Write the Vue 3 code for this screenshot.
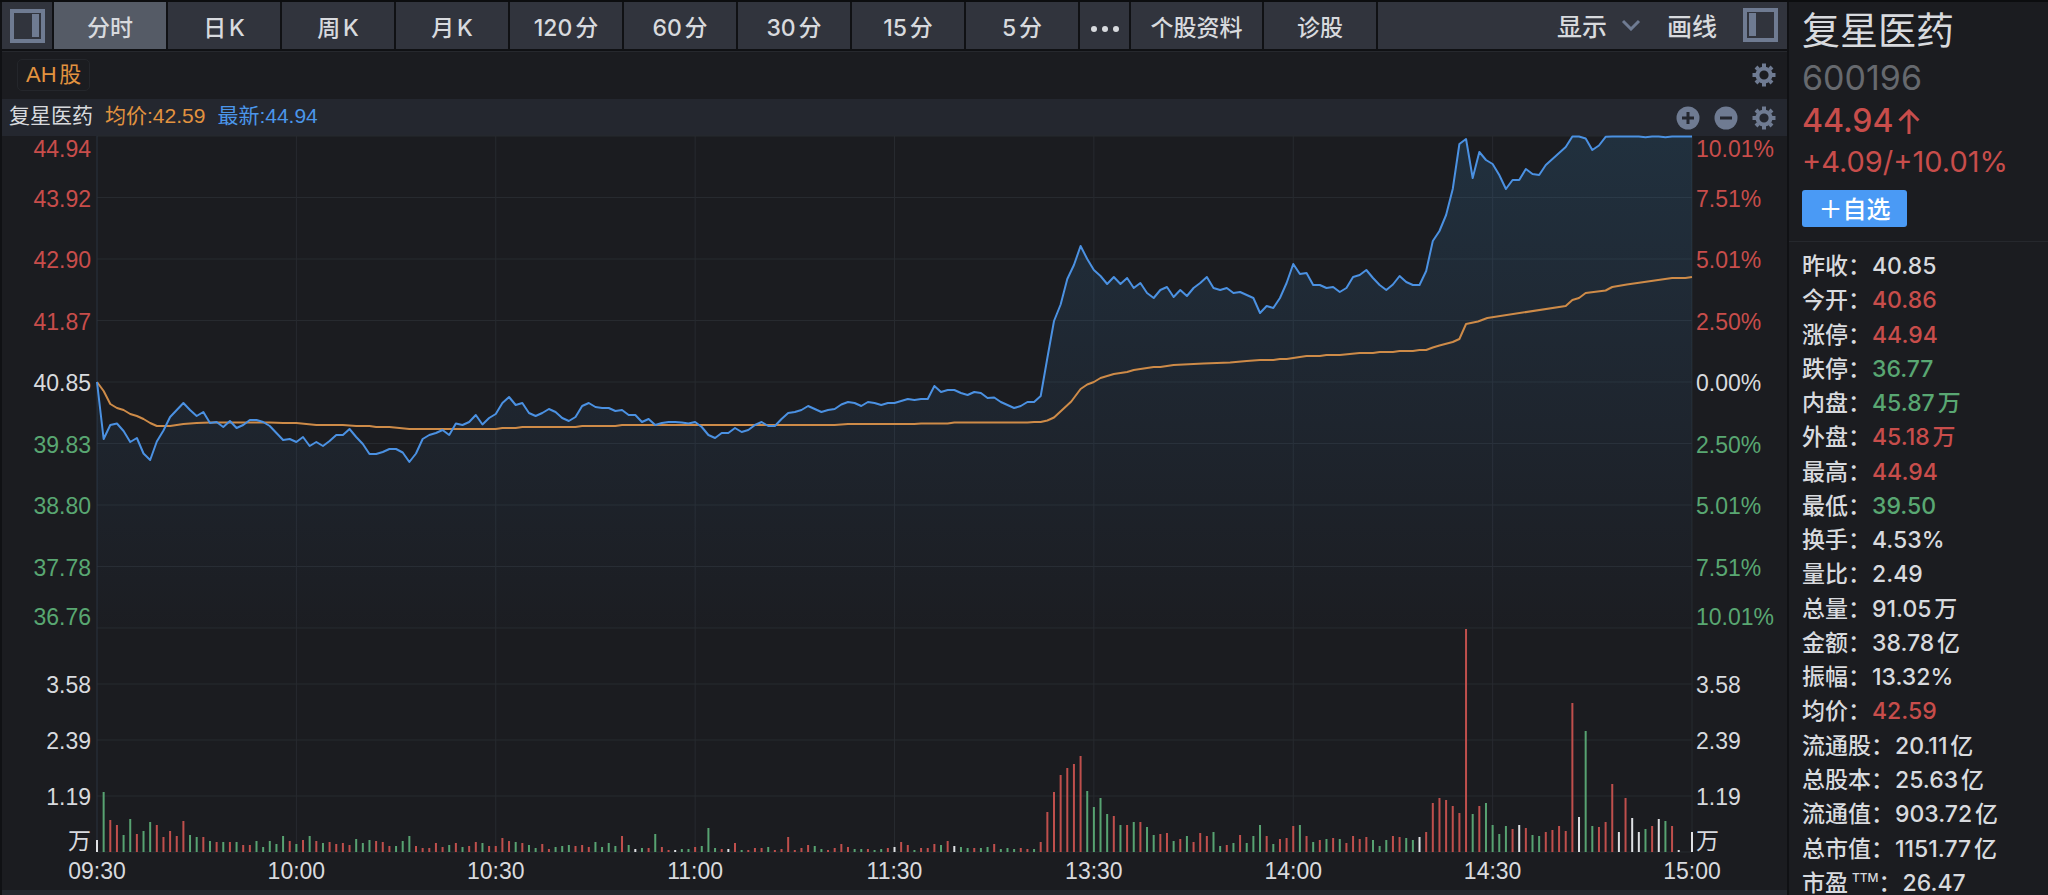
<script setup>
import { ref, computed } from 'vue'

const periods = ['分时', '日K', '周K', '月K', '120分', '60分', '30分', '15分', '5分']
const active = ref('分时')

const priceTicks = [
  ['44.94', '10.01%', 'up'],
  ['43.92', '7.51%', 'up'],
  ['42.90', '5.01%', 'up'],
  ['41.87', '2.50%', 'up'],
  ['40.85', '0.00%', 'flat'],
  ['39.83', '2.50%', 'down'],
  ['38.80', '5.01%', 'down'],
  ['37.78', '7.51%', 'down'],
  ['36.76', '10.01%', 'down'],
]
const volumeTicks = ['', '3.58', '2.39', '1.19', '万']
const times = ['09:30', '10:00', '10:30', '11:00', '11:30', '13:30', '14:00', '14:30', '15:00']

const stats = [
  ['昨收', '40.85', 'flat'],
  ['今开', '40.86', 'up'],
  ['涨停', '44.94', 'up'],
  ['跌停', '36.77', 'down'],
  ['内盘', '45.87万', 'down'],
  ['外盘', '45.18万', 'up'],
  ['最高', '44.94', 'up'],
  ['最低', '39.50', 'down'],
  ['换手', '4.53%', 'flat'],
  ['量比', '2.49', 'flat'],
  ['总量', '91.05万', 'flat'],
  ['金额', '38.78亿', 'flat'],
  ['振幅', '13.32%', 'flat'],
  ['均价', '42.59', 'up'],
  ['流通股', '20.11亿', 'flat'],
  ['总股本', '25.63亿', 'flat'],
  ['流通值', '903.72亿', 'flat'],
  ['总市值', '1151.77亿', 'flat'],
  ['市盈', '26.47', 'flat', 'TTM'],
]

// One value per trading minute, measured down from the upper price limit (492 = lower limit).
const latest = [
  246, 303, 289, 287.5, 295, 306, 302, 317.5, 324, 305.5, 294.5, 281, 274, 267, 274, 280, 276, 287, 286, 291,
  285, 292, 289, 284, 284, 286, 290, 297, 304, 303, 306, 301, 310, 306, 310, 305, 299, 299, 293, 301,
  308, 318, 318, 316, 313, 313, 316.5, 326, 317.5, 303, 299, 297, 294, 299, 287.5, 289, 286, 279, 288.5, 282,
  278, 267, 261, 269, 267, 277, 280, 277, 273, 276, 282, 285, 281, 270, 267, 271, 272, 272, 275, 274,
  279, 279, 286, 283, 289, 287, 286, 286, 286.5, 287.5, 286, 291, 299, 302, 297, 297, 292, 296, 294, 289,
  286, 290, 290, 283, 277, 276, 274, 270, 273, 276, 274, 273, 268.5, 266, 267, 270, 266, 267, 269, 267,
  267, 265, 263, 264, 263, 263, 250, 256, 254, 254, 257, 259, 256, 257, 262, 261.5, 266, 269, 272, 270,
  266, 266, 260, 222, 185, 168.5, 143, 129, 110, 123, 134, 140, 148, 141, 148, 142, 152, 147, 157, 162,
  154, 151, 161, 154, 160, 152, 147, 141, 152, 154, 152, 157, 156, 159, 162, 177, 170, 172, 162, 147,
  128, 138, 137, 149, 149, 152, 151, 156, 152, 141, 139, 134, 142, 149, 154, 148.5, 140, 146, 149, 149,
  135, 105, 95, 79, 53, 8, 3, 42, 16, 24, 28, 39, 53, 44, 44, 33, 38, 39, 29, 23,
  17, 11, 0.5, 0.5, 2.5, 14, 9.5, 0.8, 0.5, 0.5, 0.5, 0.5, 0.5, 1.2, 0.5, 0.5, 1.2, 0.5, 0.5, 0.5,
  0.5,
]

// Turning points of the average price as [minute, depth].
const average = [
  [0, 246], [1, 255], [2, 268], [3, 272], [4, 274], [5, 278], [6, 280], [7, 283], [8, 287], [9, 290], [11, 290],
  [13, 288], [15, 287], [17, 286.5], [26, 286.5], [28, 287], [30, 287], [33, 289], [37, 289], [39, 290], [41, 290],
  [42, 291], [44, 291], [47, 293], [60, 293], [61, 292], [63, 292], [64, 291], [72, 291], [73, 290], [78, 290],
  [79, 289], [111, 289], [113, 288], [123, 288], [124, 287.5], [128, 287.5], [129, 286.5], [140, 286.5], [141, 286],
  [142, 286], [143, 284.5], [144, 281.5], [145.3, 273.5], [146.6, 265.5], [148, 253], [149, 248.5], [150, 246],
  [151, 242], [153, 238], [155, 236], [156, 234], [159, 231], [160, 231], [162, 229], [166.5, 227.5], [170.5, 226.5],
  [173, 225], [175, 224], [177, 224], [178, 223], [179, 223], [182, 220], [184, 220], [185, 219], [187, 219],
  [190, 217], [192, 217], [193, 216], [195, 216], [196, 215], [198, 215], [199, 214], [200, 214], [201, 211.5],
  [202, 209.5], [204, 206], [205, 203], [206, 188], [207.8, 185.5], [209.2, 182], [221, 170], [222, 164],
  [223, 162], [224, 157], [227, 154.5], [228, 151], [230.2, 148.5], [237, 142], [239, 142], [240, 141],
]

// Traded volume per minute: direction (r rise, g fall, w unchanged) and bar height.
const volume = (
  'w12 g60 r32 r27 g17 g33 r18 g21 g30 r27 r15 r21 r16 r31 g17 g15 r15 g11 r10 g10 ' +
  'r10 g10 r7 r7 g11 g5 g11 g8 g16 r11 g8 r12 g16 r11 g9 r10 r8 r9 r7 g13 ' +
  'g9 g12 r11 r10 r6 g6 g11 g16 r6 r4 r4 r9 r5 g7 r9 g5 r6 r10 g9 r6 ' +
  'r6 r14 r11 g10 r9 g7 g4 r8 r3 g5 g6 g7 r6 r7 r5 g10 g5 g9 g6 r16 ' +
  'g7 w3 g4 r4 g18 r5 r2 w2 g3 g3 r5 g6 g24 g4 r3 w3 r9 g2 r2 r4 ' +
  'r4 g5 r2 r3 r15 r2 r4 r7 g6 g3 r2 r4 r8 r5 g3 g3 r3 g2 g3 r4 ' +
  'w5 r10 r7 g2 r4 r4 r8 g7 r11 w6 g5 g4 r4 g4 g5 r8 g3 g4 g3 r4 ' +
  'r3 g3 r10 r40 r60 r77 r84 r88 r96 g61 g45 g54 g38 r36 g27 r27 g30 r30 g25 g17 ' +
  'r18 r19 g11 r13 g16 r10 r19 r16 g20 g6 r7 g9 r17 g9 g16 g27 r16 g8 r13 r14 ' +
  'r26 g27 r16 g10 r12 g13 r14 g13 r9 r16 r13 r15 g12 g6 g12 r16 r15 g14 g12 w15 ' +
  'r20 r49 r54 r52 r46 r39 r223 g38 r46 g49 g27 g18 g26 r23 w27 r24 g17 g16 r20 r22 ' +
  'r26 r21 r149 w35 g121 g26 r25 r30 r68 w20 r54 w34 w20 g23 r26 w33 g31 r26 w2 w0 w20'
).split(' ')

const latestPath = computed(() => 'M' + latest.map((y, m) => `${m} ${y}`).join('L'))
const areaPath = computed(() => `${latestPath.value}L240 492L0 492Z`)
const averagePath = computed(() => 'M' + average.map((p) => p.join(' ')).join('L'))
const barsOf = (kind) =>
  volume.map((v, m) => (v[0] === kind ? `M${m} 716V${716 - Number(v.slice(1))}` : '')).join('')

const gridPath =
  [0, 61.5, 123, 184.5, 246, 307.5, 369, 430.5, 492, 548, 604, 660, 716].map((y) => `M0 ${y}H240`).join('') +
  [30, 60, 90, 120, 150, 180, 210, 240].map((x) => `M${x} 0V716`).join('')
</script>

<template>
  <div class="app">
    <main class="main">
      <nav class="toolbar">
        <button class="cell icon-cell" aria-label="左侧栏">
          <svg class="panel" viewBox="0 0 35 34"><rect x="2" y="2" width="31" height="30" /><path d="M25.5 5V28" /></svg>
        </button>
        <button
          v-for="p in periods"
          :key="p"
          class="cell tab"
          :class="{ active: p === active }"
          @click="active = p"
        >{{ p }}</button>
        <button class="cell more" aria-label="更多">
          <svg viewBox="0 0 28 6"><circle cx="3" cy="3" r="3" /><circle cx="14" cy="3" r="3" /><circle cx="25" cy="3" r="3" /></svg>
        </button>
        <button class="cell tab wide">个股资料</button>
        <button class="cell tab">诊股</button>
        <div class="cell tools">
          <button class="tool">
            显示
            <svg class="chevron" viewBox="0 0 20 12"><path d="M2 2L10 10L18 2" /></svg>
          </button>
          <button class="tool">画线</button>
          <button class="tool" aria-label="右侧栏">
            <svg class="panel" viewBox="0 0 35 34"><rect x="2" y="2" width="31" height="30" /><path d="M9.5 5V28" /></svg>
          </button>
        </div>
      </nav>

      <div class="tags">
        <button class="tag">AH股</button>
        <button class="round" aria-label="设置">
          <svg viewBox="-12 -12 24 24">
            <circle r="6.6" class="ring" />
            <path class="teeth" d="M0-8V-11.5M0 8V11.5M-8 0H-11.5M8 0H11.5M5.7-5.7L8-8M-5.7-5.7L-8-8M5.7 5.7L8 8M-5.7 5.7L-8 8" />
          </svg>
        </button>
      </div>

      <div class="legend">
        <span>复星医药</span>
        <span class="avg">均价:42.59</span>
        <span class="now">最新:44.94</span>
        <div class="actions">
          <button class="round" aria-label="放大">
            <svg viewBox="-12 -12 24 24"><circle r="11.5" class="disc" /><path class="sign" d="M-6 0H6M0-6V6" /></svg>
          </button>
          <button class="round" aria-label="缩小">
            <svg viewBox="-12 -12 24 24"><circle r="11.5" class="disc" /><path class="sign" d="M-6 0H6" /></svg>
          </button>
          <button class="round" aria-label="指标设置">
            <svg viewBox="-12 -12 24 24">
              <circle r="6.6" class="ring" />
              <path class="teeth" d="M0-8V-11.5M0 8V11.5M-8 0H-11.5M8 0H11.5M5.7-5.7L8-8M-5.7-5.7L-8-8M5.7 5.7L8 8M-5.7 5.7L-8 8" />
            </svg>
          </button>
        </div>
      </div>

      <section class="chart">
        <div class="axis price left">
          <span v-for="t in priceTicks" :key="t[0]" :class="t[2]">{{ t[0] }}</span>
        </div>
        <svg class="plot" viewBox="0 0 240 716" preserveAspectRatio="none" role="img" aria-label="分时走势">
          <defs>
            <linearGradient id="fill" gradientUnits="userSpaceOnUse" x1="0" y1="0" x2="0" y2="492">
              <stop offset="0" stop-color="#3f9bdc" stop-opacity="0.16" />
              <stop offset="1" stop-color="#4a94e8" stop-opacity="0.01" />
            </linearGradient>
          </defs>
          <path class="grid" :d="gridPath" />
          <path class="edge" d="M0 0V716" />
          <path :d="areaPath" fill="url(#fill)" />
          <path class="bars rise" :d="barsOf('r')" />
          <path class="bars fall" :d="barsOf('g')" />
          <path class="bars same" :d="barsOf('w')" />
          <path class="line average" :d="averagePath" />
          <path class="line latest" :d="latestPath" />
        </svg>
        <div class="axis price right">
          <span v-for="(t, i) in priceTicks" :key="i" :class="t[2]">{{ t[1] }}</span>
        </div>
        <div class="axis volume left">
          <span v-for="t in volumeTicks" :key="t">{{ t }}</span>
        </div>
        <div class="axis volume right">
          <span v-for="t in volumeTicks" :key="t">{{ t }}</span>
        </div>
        <div class="times">
          <span v-for="t in times" :key="t">{{ t }}</span>
        </div>
      </section>
      <div class="strip"></div>
    </main>

    <aside class="side">
      <header class="quote">
        <h1>复星医药</h1>
        <p class="code">600196</p>
        <p class="last">44.94<svg viewBox="0 0 22 25"><path d="M11 25V2M1.5 11.5L11 2L20.5 11.5" /></svg></p>
        <p class="change">+4.09/+10.01%</p>
        <button class="add">＋自选</button>
      </header>
      <dl class="stats">
        <div v-for="s in stats" :key="s[0]">
          <dt>{{ s[0] }}<sup v-if="s[3]">{{ s[3] }}</sup>：</dt>
          <dd :class="s[2]">{{ s[1] }}</dd>
        </div>
      </dl>
    </aside>
  </div>
</template>

<style>
body {
  background: #1b1c20;
}
</style>

<style scoped>
* {
  box-sizing: border-box;
}
.app {
  display: grid;
  grid-template-rows: minmax(0, 1fr);
  grid-template-columns: minmax(0, 1fr) 261px;
  height: 100vh;
  min-height: 860px;
  border-top: 2px solid #0c0d0f;
  background: #1b1c20;
  color: #d8dade;
  font-family: "Liberation Sans", "Noto Sans CJK SC", sans-serif;
  text-autospace: normal;
}
button {
  padding: 0;
  border: 0;
  background: none;
  color: inherit;
  font: inherit;
  text-autospace: inherit;
  cursor: pointer;
}
svg {
  display: block;
}
.up {
  color: #c84d4b;
}
.down {
  color: #59a772;
}
.flat {
  color: #d8dade;
}

.main {
  display: flex;
  flex-direction: column;
  min-width: 0;
  border-left: 2px solid #101114;
}
.toolbar {
  display: flex;
  gap: 2px;
  height: 49px;
  padding-bottom: 2px;
  background: #101114;
  font-family: Inter, "Noto Sans CJK SC", sans-serif;
  font-size: 23px;
  font-weight: 500;
}
.cell {
  background: #31343d;
}
.icon-cell {
  display: flex;
  align-items: center;
  justify-content: center;
  width: 50px;
}
.panel {
  width: 35px;
  height: 34px;
  fill: none;
  stroke: #6f7b92;
  stroke-width: 4;
}
.panel path {
  stroke-width: 7;
}
.tab {
  width: 112px;
  padding-top: 1px;
}
.tab.active {
  background: #555b66;
}
.tab.wide {
  width: 131px;
}
.more {
  display: flex;
  align-items: center;
  justify-content: center;
  width: 49px;
  padding-top: 6px;
}
.more svg {
  width: 28px;
  height: 6px;
  fill: #d8dade;
}
.tools {
  display: flex;
  flex: 1;
  align-items: center;
  justify-content: flex-end;
  gap: 26px;
  padding: 0 9px 2px 0;
  font-size: 25px;
}
.tool {
  display: flex;
  align-items: center;
  gap: 14px;
}
.chevron {
  width: 20px;
  height: 12px;
  fill: none;
  stroke: #6f7b92;
  stroke-width: 3;
}

.tags {
  display: flex;
  align-items: center;
  justify-content: space-between;
  height: 48px;
  padding: 0 11px 1px 15px;
  border-top: 1px solid #26282d;
}
.tag {
  height: 32px;
  padding: 0 8px;
  border: 1px solid #24262b;
  border-radius: 5px;
  color: #e2933f;
  font-size: 22px;
  line-height: 30px;
}
.round svg {
  width: 24px;
  height: 24px;
}
.ring {
  fill: none;
  stroke: #6f7b92;
  stroke-width: 4;
}
.teeth {
  fill: none;
  stroke: #6f7b92;
  stroke-width: 4;
}
.disc {
  fill: #6f7b92;
}
.sign {
  fill: none;
  stroke: #24272f;
  stroke-width: 3;
}
.legend {
  display: flex;
  align-items: center;
  gap: 12px;
  height: 37px;
  padding: 0 11px 0 7px;
  background: #24272f;
  font-size: 21px;
}
.legend > span {
  padding-bottom: 7px;
}
.avg {
  color: #e2933f;
}
.now {
  color: #4b96ea;
}
.actions {
  display: flex;
  gap: 14px;
  margin-left: auto;
}

.chart {
  display: grid;
  flex: 1;
  grid-template-columns: 95px minmax(0, 1fr) 95px;
  grid-template-rows: minmax(0, 492fr) minmax(0, 224fr) 38px;
  min-height: 0;
  font-size: 23px;
  line-height: 24px;
}
.plot {
  grid-area: 1 / 2 / 3 / 3;
  width: 100%;
  height: 100%;
  overflow: visible;
}
.plot path {
  vector-effect: non-scaling-stroke;
}
.grid,
.edge {
  fill: none;
  stroke: #272a2f;
  stroke-width: 1;
}
.edge {
  stroke: #2b323f;
}
.bars {
  fill: none;
  stroke-width: 2;
}
.rise {
  stroke: #bf4f4c;
}
.fall {
  stroke: #57a271;
}
.same {
  stroke: #dfe1e4;
}
.line {
  fill: none;
  stroke-width: 2;
  stroke-linejoin: round;
}
.latest {
  stroke: #4b91e2;
}
.average {
  stroke: #ce8b48;
}
.axis {
  display: grid;
  margin: 1px 0 -1px;
}
.price {
  grid-row: 1;
  grid-template-rows: 1fr repeat(7, 2fr) 1fr;
}
.volume {
  grid-row: 2;
  grid-template-rows: 1fr repeat(3, 2fr) 1fr;
}
.axis span {
  align-self: center;
}
.price span:first-child {
  align-self: start;
}
.axis span:last-child {
  align-self: end;
}
.left {
  grid-column: 1;
  padding-right: 6px;
  text-align: right;
}
.right {
  grid-column: 3;
  padding-left: 4px;
}
.times {
  display: grid;
  grid-row: 3;
  grid-column: 2;
  grid-template-columns: repeat(9, 1fr);
  align-items: center;
  margin: 0 -6.25%;
  text-align: center;
}
.strip {
  height: 5px;
  background: #24272f;
}

.side {
  display: flex;
  flex-direction: column;
  min-width: 0;
  border-left: 2px solid #101114;
  font-family: Inter, "Noto Sans CJK SC", sans-serif;
}
.quote {
  padding: 2px 0 14px 13px;
  border-bottom: 1px solid #26282d;
}
.quote h1,
.quote p {
  margin: 0;
  font-weight: 400;
}
.quote h1 {
  font-size: 38px;
  line-height: 52px;
}
.quote .code {
  color: #66696e;
  font-size: 34px;
  line-height: 44px;
}
.quote .last {
  display: flex;
  align-items: center;
  gap: 4px;
  color: #c84d4b;
  font-size: 32px;
  font-weight: 500;
  line-height: 42px;
}
.last svg {
  width: 22px;
  height: 25px;
  fill: none;
  stroke: #c84d4b;
  stroke-width: 3;
}
.quote .change {
  color: #c84d4b;
  font-size: 29px;
  line-height: 40px;
}
.add {
  display: block;
  width: 105px;
  height: 37px;
  margin-top: 8px;
  padding-top: 2px;
  border-radius: 3px;
  background: #4a9af5;
  color: #fff;
  font-size: 24px;
  font-weight: 500;
  line-height: 35px;
}
.stats {
  display: flex;
  flex: 1;
  flex-direction: column;
  justify-content: space-between;
  margin: 0;
  padding: 12px 0 0 13px;
  font-size: 23px;
  line-height: 24px;
}
.stats div {
  display: flex;
  gap: 1px;
  height: 24px;
}
.stats dt,
.stats dd {
  margin: 0;
  font-weight: 500;
}
.stats sup {
  margin-left: 1px;
  font-size: 12px;
  line-height: 1;
}
</style>
